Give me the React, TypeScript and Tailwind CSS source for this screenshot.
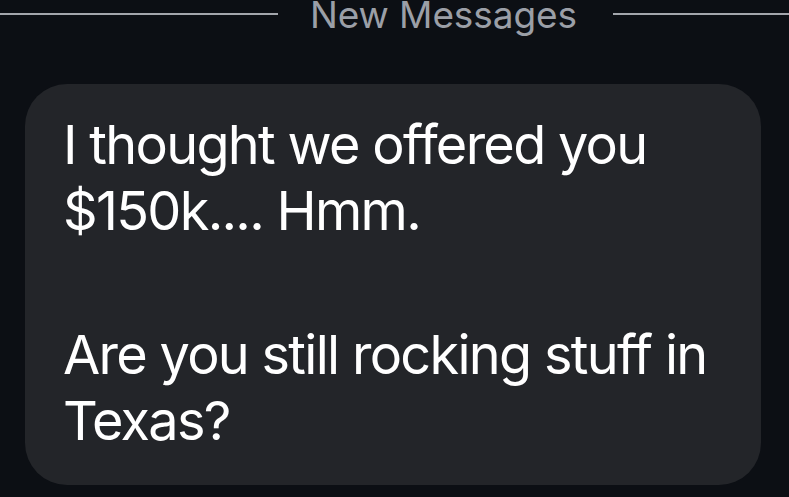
export default function App() {
  return (
    <div className="w-[789px] h-[497px] overflow-hidden bg-[#0c0f14] font-['Inter',sans-serif]">
      {/* Divider */}
      <div className="flex items-center -mt-[8px] h-[44px]">
        <div className="h-[2px] w-[278px] bg-[#a3a6ac]" />
        <span className="pl-[32px] pr-[36px] text-[37px] leading-none text-[#9b9fa7] tracking-[-0.1px] whitespace-nowrap">
          New Messages
        </span>
        <div className="h-[2px] flex-1 bg-[#a3a6ac]" />
      </div>

      {/* Message bubble */}
      <div className="ml-[25px] mt-[48px] w-[736px] h-[401px] rounded-[42px] bg-[#232529] pl-[38px] pr-[20px] pt-[28px] text-white text-[54px] leading-[66px] tracking-[-1.7px] whitespace-nowrap">
        <p>I thought we offered you</p>
        <p>$150k.... Hmm.</p>
        <p className="mt-[78px]">Are you still rocking stuff in</p>
        <p>Texas?</p>
      </div>
    </div>
  );
}
